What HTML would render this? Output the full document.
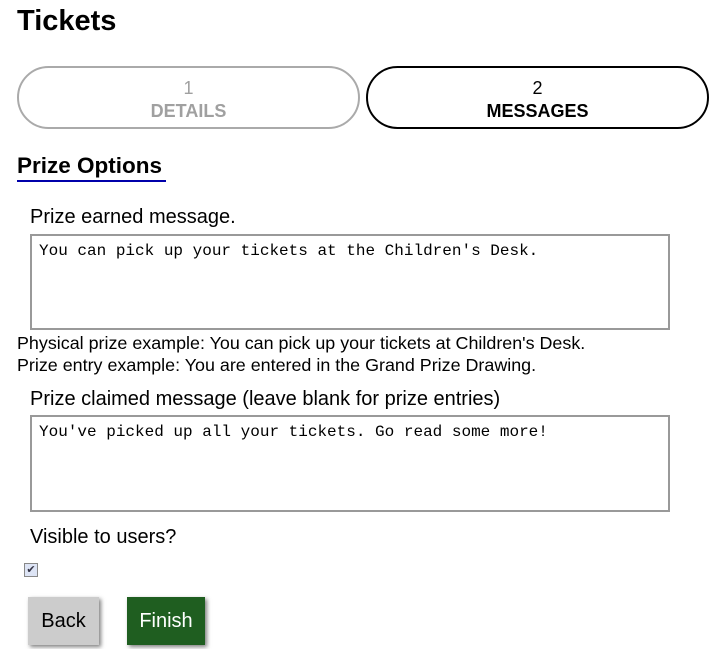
<!DOCTYPE html>
<html><head><style>
body{margin:0;background:#fff;font-family:"Liberation Sans",sans-serif;color:#000;position:relative;width:728px;height:649px;overflow:hidden}
.a{position:absolute}
h1{position:absolute;left:17px;top:5px;margin:0;font-size:29px;font-weight:bold}
.pill{position:absolute;top:66px;height:59px;width:339px;border-radius:32px;border:2px solid #aaa;text-align:center;font-size:18px;line-height:23px;box-sizing:content-box}
.pill div{padding-top:9px}
.ta{position:absolute;left:30px;width:640px;border:2px solid #999;font-family:"Liberation Mono",monospace;font-size:16px;padding:6px 0 0 7px;box-sizing:border-box}
.lbl{position:absolute;left:30px;font-size:20px}
.btn{position:absolute;top:597px;height:48px;font-size:20px;line-height:48px;text-align:center;box-shadow:2px 2px 4px rgba(0,0,0,.5)}
</style></head><body>
<h1>Tickets</h1>
<div class="pill" style="left:17px;color:#a0a0a0;font-weight:bold"><div><span style="font-weight:normal">1</span><br>DETAILS</div></div>
<div class="pill" style="left:366px;border-color:#000;font-weight:bold"><div><span style="font-weight:normal">2</span><br>MESSAGES</div></div>
<div class="a" style="left:17px;top:153px;font-size:22.5px;font-weight:bold;border-bottom:2px solid #00a;padding-bottom:1px;width:149px;white-space:nowrap">Prize Options</div>
<div class="lbl" style="top:206px">Prize earned message.</div>
<div class="ta" style="top:234px;height:96px">You can pick up your tickets at the Children's Desk.</div>
<div class="a" style="left:17px;top:332px;font-size:17.9px;line-height:22px;white-space:nowrap">Physical prize example: You can pick up your tickets at Children's Desk.<br>Prize entry example: You are entered in the Grand Prize Drawing.</div>
<div class="lbl" style="top:388px">Prize claimed message (leave blank for prize entries)</div>
<div class="ta" style="top:415px;height:97px">You've picked up all your tickets. Go read some more!</div>
<div class="lbl" style="top:526px">Visible to users?</div>
<div class="a" style="left:24px;top:563px;width:12px;height:12px;border:1px solid #888;background:#dde4f5;font-size:11px;line-height:12px;text-align:center;color:#334">✔</div>
<div class="btn" style="left:28px;width:71px;background:#ccc">Back</div>
<div class="btn" style="left:127px;width:78px;background:#1f5e20;color:#fff">Finish</div>
</body></html>
